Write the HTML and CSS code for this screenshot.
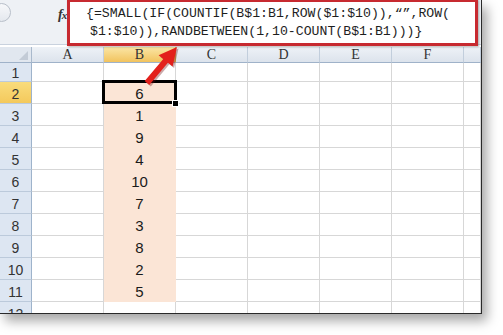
FILE: index.html
```html
<!DOCTYPE html>
<html>
<head>
<meta charset="utf-8">
<link rel="stylesheet" href="styles.css">
</head>
<body>
<div class="page">
  <div class="window">
    <div class="formula-bar">
      <div class="namebox-end"><span class="round"></span></div>
      <div class="fx">f<span>x</span></div>
      <div class="input">
        <div class="line">{=SMALL(IF(COUNTIF(B$1:B1,ROW($1:$10)),“”,ROW(</div>
        <div class="line l2">$1:$10)),RANDBETWEEN(1,10-COUNT(B$1:B1)))}</div>
      </div>
      <div class="bar-end"></div>
    </div>
    <div class="sheet">
      <div class="corner"></div><div class="ch">A</div><div class="ch hl">B</div><div class="ch">C</div><div class="ch">D</div><div class="ch">E</div><div class="ch">F</div><div class="ch last"></div>
      <div class="rh">1</div><div class="c"></div><div class="c"></div><div class="c"></div><div class="c"></div><div class="c"></div><div class="c"></div><div class="c"></div>
      <div class="rh hl">2</div><div class="c"></div><div class="c b sel">6</div><div class="c"></div><div class="c"></div><div class="c"></div><div class="c"></div><div class="c"></div>
      <div class="rh">3</div><div class="c"></div><div class="c b">1</div><div class="c"></div><div class="c"></div><div class="c"></div><div class="c"></div><div class="c"></div>
      <div class="rh">4</div><div class="c"></div><div class="c b">9</div><div class="c"></div><div class="c"></div><div class="c"></div><div class="c"></div><div class="c"></div>
      <div class="rh">5</div><div class="c"></div><div class="c b">4</div><div class="c"></div><div class="c"></div><div class="c"></div><div class="c"></div><div class="c"></div>
      <div class="rh">6</div><div class="c"></div><div class="c b">10</div><div class="c"></div><div class="c"></div><div class="c"></div><div class="c"></div><div class="c"></div>
      <div class="rh">7</div><div class="c"></div><div class="c b">7</div><div class="c"></div><div class="c"></div><div class="c"></div><div class="c"></div><div class="c"></div>
      <div class="rh">8</div><div class="c"></div><div class="c b">3</div><div class="c"></div><div class="c"></div><div class="c"></div><div class="c"></div><div class="c"></div>
      <div class="rh">9</div><div class="c"></div><div class="c b">8</div><div class="c"></div><div class="c"></div><div class="c"></div><div class="c"></div><div class="c"></div>
      <div class="rh">10</div><div class="c"></div><div class="c b">2</div><div class="c"></div><div class="c"></div><div class="c"></div><div class="c"></div><div class="c"></div>
      <div class="rh">11</div><div class="c"></div><div class="c b">5</div><div class="c"></div><div class="c"></div><div class="c"></div><div class="c"></div><div class="c"></div>
      <div class="rh">12</div><div class="c"></div><div class="c"></div><div class="c"></div><div class="c"></div><div class="c"></div><div class="c"></div><div class="c"></div>
    </div>
  </div>
  <svg class="arrow" width="503" height="335" viewBox="0 0 503 335">
    <g transform="translate(1.5,1.5)" fill="#6a0c0c" opacity="0.35">
      <polygon points="144.7,81.1 163.3,59.0 158.6,55.2 177,47 172.6,66.6 167.9,62.8 149.3,84.9"/>
    </g>
    <polygon fill="#e3201c" points="144.7,81.1 163.3,59.0 158.6,55.2 177,47 172.6,66.6 167.9,62.8 149.3,84.9"/>
  </svg>
</div>
</body>
</html>
```
FILE: styles.css
```css
html, body {
  margin: 0;
  padding: 0;
  background: #ffffff;
}
.page {
  position: relative;
  width: 503px;
  height: 335px;
  overflow: hidden;
}
.window {
  box-sizing: border-box;
  width: 482px;
  height: 314px;
  overflow: hidden;
  background: #fff;
  border-right: 1px solid #2a2a2a;
  border-bottom: 1px solid #2a2a2a;
  box-shadow: 5px 7px 11px rgba(0,0,0,0.35);
}
.formula-bar {
  display: flex;
  height: 44px;
  background: #eef1f5;
  border-bottom: 1px solid #c9d2de;
  margin-bottom: 2px;
}
.namebox-end {
  width: 58px;
  position: relative;
}
.round {
  position: absolute;
  left: -8px;
  top: 3px;
  width: 17px;
  height: 17px;
  border-radius: 50%;
  border: 1px solid #b8bfc9;
  background: linear-gradient(#f7f8fa, #e4e8ee);
}
.fx {
  width: 9px;
  padding-top: 7px;
  font-family: "Liberation Serif", serif;
  font-style: italic;
  font-weight: bold;
  font-size: 14px;
  color: #333;
  letter-spacing: -1px;
}
.fx span {
  font-size: 11px;
}
.input {
  width: 411px;
  box-sizing: border-box;
  height: 47px;
  margin-top: -1px;
  border: 3px solid #c72a30;
  background: #ffffff;
  padding: 3px 0 0 16px;
  box-shadow: 1px 1px 2px rgba(0,0,0,0.3);
  position: relative;
  z-index: 2;
}
.line {
  font-family: "Liberation Mono", monospace;
  font-size: 13.2px;
  line-height: 18px;
  color: #1e1e1e;
  white-space: pre;
}
.l2 {
  padding-left: 4px;
}
.bar-end {
  flex: 1;
}
.sheet {
  display: grid;
  grid-template-columns: 32px repeat(6, 72px) 17px;
  grid-template-rows: 16px 19px repeat(11, 22px);
}
.sheet > div {
  box-sizing: border-box;
}
.corner {
  background: #e1e7ef;
  border-right: 1px solid #a9b9cc;
  border-bottom: 1px solid #9fb2c9;
  position: relative;
}
.corner::after {
  content: "";
  position: absolute;
  right: 3px;
  bottom: 2px;
  width: 0;
  height: 0;
  border-left: 9px solid transparent;
  border-bottom: 9px solid #c3cbd6;
}
.ch {
  background: linear-gradient(#eef2f7, #dce3ec);
  border-right: 1px solid #c2cedc;
  border-bottom: 1px solid #9fb2c9;
  font-family: "Liberation Serif", serif;
  font-size: 14px;
  line-height: 15px;
  text-align: center;
  color: #333;
}
.ch.hl {
  background: linear-gradient(#fae6a6, #f2c35e);
  border-right: 1px solid #d8b45a;
}
.rh {
  background: #dde6f2;
  border-right: 1px solid #9eb3cb;
  border-bottom: 1px solid #bccadb;
  font-family: "Liberation Sans", sans-serif;
  font-size: 14px;
  color: #333;
  display: flex;
  align-items: center;
  justify-content: center;
  padding-top: 2px;
}
.rh.hl {
  background: linear-gradient(#f9dc7c, #f4c95c);
}
.c {
  border-right: 1px solid #d7d7d7;
  border-bottom: 1px solid #d7d7d7;
  font-family: "Liberation Sans", sans-serif;
  font-size: 15px;
  color: #1a1a1a;
  display: flex;
  align-items: center;
  justify-content: center;
  padding-top: 1px;
}
.c.b {
  background: #fbe5d6;
  border-right-color: #fbe5d6;
  border-bottom-color: #fbe5d6;
}
.c.sel {
  position: relative;
  z-index: 1;
}
.c.sel::before {
  content: "";
  position: absolute;
  left: -2px;
  top: -2px;
  right: -2px;
  bottom: -1px;
  border: 3px solid #000;
}
.c.sel::after {
  content: "";
  position: absolute;
  right: -4px;
  bottom: -4px;
  width: 5px;
  height: 5px;
  background: #000;
  border: 1px solid #fff;
}
.arrow {
  position: absolute;
  left: 0;
  top: 0;
  z-index: 5;
  pointer-events: none;
}
```
